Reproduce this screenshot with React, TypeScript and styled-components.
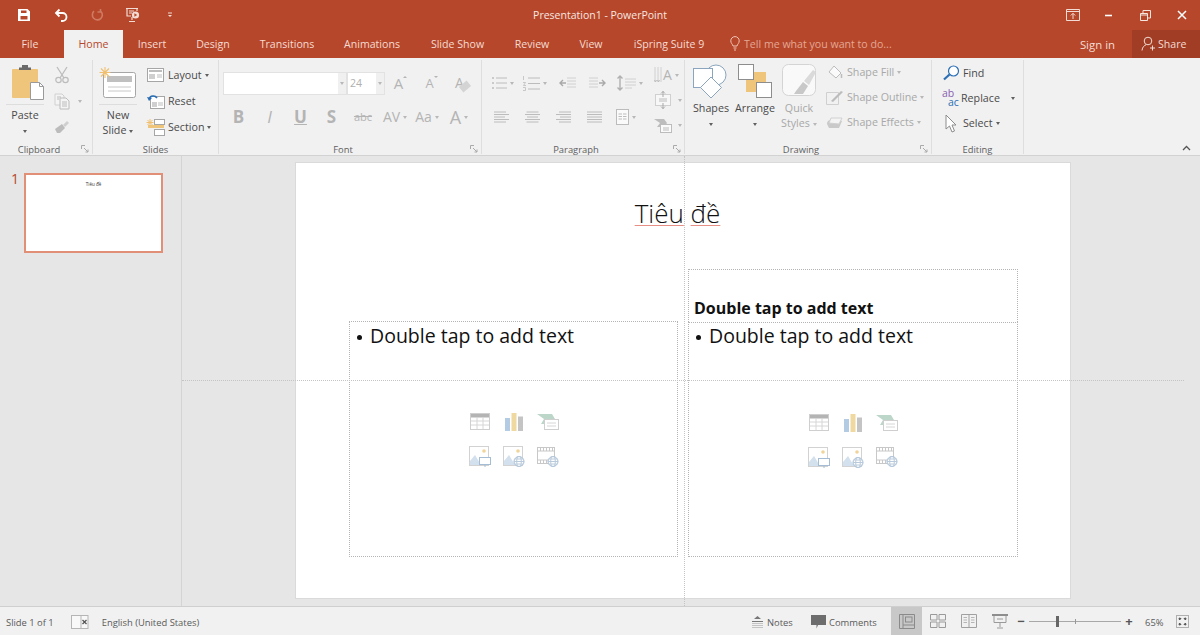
import React, { FC, ReactNode } from 'react'
import styled, { createGlobalStyle } from 'styled-components'

const ACCENT = '#b7472a'
const RIBBON = '#f1f1f1'
const TEXT = '#4a4a4a'
const DIM = '#a8a8a8'

const GlobalStyle = createGlobalStyle`
  html, body { margin: 0; padding: 0; background: #e6e6e6; overflow: hidden; }
  body { font-family: "Open Sans", "Noto Sans", sans-serif; color: ${TEXT}; }
`

const Page = styled.div`
  width: 1200px;
  height: 635px;
  display: flex;
  flex-direction: column;
  overflow: hidden;
`

/* title bar */
const TitleBar = styled.header`
  height: 30px;
  background: ${ACCENT};
  display: grid;
  grid-template-columns: 1fr auto 1fr;
  align-items: center;
  color: #f6e6e0;
`
const Qat = styled.div`
  display: flex;
  padding-left: 6px;
`
const BarButton = styled.div`
  width: 36.4px;
  height: 26px;
  display: flex;
  align-items: center;
  justify-content: center;
`
const Title = styled.div`
  font-size: 10.5px;
`
const WindowButtons = styled.div`
  display: flex;
  justify-content: flex-end;
`

/* tabs */
const TabRow = styled.nav`
  height: 28px;
  background: ${ACCENT};
  display: flex;
  align-items: stretch;
  color: #f3dcd4;
  font-size: 10.6px;
`
const Tab = styled.div<{ $w: number; $active?: boolean }>`
  width: ${(p) => p.$w}px;
  box-sizing: border-box;
  padding-bottom: 1px;
  display: flex;
  align-items: center;
  justify-content: center;
  background: ${(p) => (p.$active ? RIBBON : 'transparent')};
  color: ${(p) => (p.$active ? ACCENT : 'inherit')};
`
const FileTab = styled(Tab)`
  padding-right: 4px;
`
const TellMe = styled.div`
  margin-left: 10px;
  padding-bottom: 1px;
  display: flex;
  align-items: center;
  gap: 4px;
  color: #e3a895;
`
const SignIn = styled.div`
  margin-left: auto;
  padding: 1px 17px 0 0;
  font-size: 11.4px;
  display: flex;
  align-items: center;
`
const ShareButton = styled.div`
  width: 68px;
  box-sizing: border-box;
  padding: 0 0 1px 9px;
  background: #a03d24;
  display: flex;
  align-items: center;
  gap: 2px;
`

/* ribbon */
const Ribbon = styled.section`
  height: 97px;
  background: ${RIBBON};
  border-bottom: 1px solid #d2d2d2;
  display: flex;
  font-size: 10.7px;
`
const GroupBox = styled.div<{ $w: number }>`
  width: ${(p) => p.$w}px;
  margin: 2px 0 1px;
  border-right: 1px solid #dedede;
  box-sizing: border-box;
  display: flex;
  flex-direction: column;
`
const GroupBody = styled.div`
  flex: 1;
  display: flex;
  min-height: 0;
`
const GroupLabel = styled.div<{ $launcher?: boolean }>`
  height: 10px;
  position: relative;
  padding-right: ${(p) => (p.$launcher ? 14 : 0)}px;
  display: flex;
  align-items: center;
  justify-content: center;
  font-size: 9.4px;
  color: #606060;
`
const Launcher = styled.div`
  position: absolute;
  right: 3px;
  top: 1px;
  display: flex;
`
const Collapse = styled.div`
  margin-left: auto;
  align-self: flex-end;
  padding: 0 9px 4px 0;
  display: flex;
`
const Caret = styled.span<{ $dim?: boolean; $left?: number }>`
  display: inline-block;
  width: 0;
  height: 0;
  margin-left: ${(p) => p.$left ?? 3}px;
  border: 2.5px solid transparent;
  border-top: 3px solid ${(p) => (p.$dim ? '#b8b8b8' : '#606060')};
  border-bottom: 0;
  vertical-align: middle;
`
const BigButton = styled.div<{ $w: number; $dim?: boolean; $left?: number }>`
  width: ${(p) => p.$w}px;
  margin-left: ${(p) => p.$left ?? 0}px;
  display: flex;
  flex-direction: column;
  align-items: center;
  text-align: center;
  line-height: 15px;
  color: ${(p) => (p.$dim ? DIM : TEXT)};
`
const BigIcon = styled.div<{ $h: number; $rule?: boolean; $mb?: number }>`
  height: ${(p) => p.$h}px;
  width: 100%;
  display: flex;
  align-items: center;
  justify-content: center;
  border-bottom: ${(p) => (p.$rule ? '1px solid #dddddd' : 'none')};
  margin-bottom: ${(p) => p.$mb ?? 3}px;
`
const StackColumn = styled.div<{ $left: number; $top?: number; $gap?: number }>`
  margin-left: ${(p) => p.$left}px;
  padding-top: ${(p) => p.$top ?? 5}px;
  display: flex;
  flex-direction: column;
  gap: ${(p) => p.$gap ?? 6}px;
`
const SmallRow = styled.div<{ $dim?: boolean; $gap?: number }>`
  height: 20px;
  display: flex;
  align-items: center;
  gap: ${(p) => p.$gap ?? 3}px;
  white-space: nowrap;
  color: ${(p) => (p.$dim ? DIM : TEXT)};
`
const IconSlot = styled.span<{ $w: number }>`
  width: ${(p) => p.$w}px;
  display: flex;
  align-items: center;
  justify-content: center;
`
const ToolRows = styled.div`
  display: flex;
  flex-direction: column;
  padding: 11px 0 0 4px;
  gap: 10px;
`
const ToolRow = styled.div`
  display: flex;
  height: 24px;
  align-items: center;
`
const Tool = styled.div<{ $w: number }>`
  width: ${(p) => p.$w}px;
  height: 24px;
  display: flex;
  align-items: center;
  justify-content: center;
  color: #b4b4b4;
`
const ComboField = styled.div<{ $w: number }>`
  width: ${(p) => p.$w}px;
  height: 23px;
  background: #ffffff;
  border: 1px solid #e2e2e2;
  box-sizing: border-box;
  display: flex;
  align-items: center;
  justify-content: space-between;
  padding: 0 2px;
  font-size: 10.5px;
  color: #b0b0b0;
`
const ComboDrop = styled.div`
  width: 8px;
  height: 21px;
  margin-right: -2px;
  margin-left: auto;
  background: #f0f0f0;
  display: flex;
  align-items: center;
  justify-content: center;
  & > span { margin: 0; }
`
const ToolLetter = styled.span<{ $size: number; $bold?: boolean; $italic?: boolean; $under?: boolean; $strike?: boolean }>`
  font-size: ${(p) => p.$size}px;
  line-height: 20px;
  font-weight: ${(p) => (p.$bold ? 700 : 400)};
  font-style: ${(p) => (p.$italic ? 'italic' : 'normal')};
  text-decoration: ${(p) => (p.$under ? 'underline' : p.$strike ? 'line-through' : 'none')};
  color: #b4b4b4;
`
const SizeArrow = styled.span<{ $up?: boolean }>`
  align-self: flex-start;
  margin-top: 5px;
  width: 0;
  height: 0;
  border: 2.5px solid transparent;
  ${(p) => (p.$up ? 'border-bottom: 2.5px solid #b4b4b4; border-top: 0;' : 'border-top: 2.5px solid #b4b4b4; border-bottom: 0;')}
`
const EraserMark = styled.span`
  width: 10px;
  height: 7px;
  margin: 7px 0 0 -4px;
  background: #d4d4d4;
  transform: rotate(-40deg);
`
const ReplaceMark = styled.span`
  display: inline-flex;
  flex-direction: column;
  width: 18px;
  font-size: 10.5px;
  line-height: 9px;
  color: #8a5fb0;
  & > b { font-weight: 400; color: #2a6fb5; padding-left: 6px; }
`

/* work area */
const Work = styled.main`
  flex: 1;
  display: flex;
  background: #e6e6e6;
  min-height: 0;
`
const ThumbPane = styled.aside`
  width: 170px;
  border-right: 1px solid #d4d4d4;
  display: flex;
  padding: 17px 0 0 11px;
  gap: 5px;
`
const ThumbNumber = styled.div`
  font-size: 14px;
  line-height: 12px;
  color: ${ACCENT};
`
const Thumb = styled.div`
  width: 135px;
  height: 70px;
  background: #fff;
  border: 2px solid #e28f78;
  text-align: center;
  font-size: 4.5px;
  line-height: 6px;
  padding-top: 6px;
  color: #333;
`
const SlidePane = styled.div`
  flex: 1;
  position: relative;
  padding: 7px 0 0 114px;
`
const GuideH = styled.div`
  position: absolute;
  left: 0;
  right: 16px;
  top: 224px;
  border-top: 1px dotted #c4c4c4;
`
const GuideV = styled.div`
  position: absolute;
  left: 502px;
  top: 0;
  bottom: 0;
  border-left: 1px dotted #c4c4c4;
`
const Slide = styled.div`
  width: 774px;
  height: 435px;
  background: #fff;
  box-shadow: 0 0 0 1px #dadada;
  display: flex;
  flex-direction: column;
`
const SlideTitle = styled.div`
  height: 106px;
  padding: 32px 11px 0 0;
  box-sizing: border-box;
  text-align: center;
  font-weight: 300;
  font-size: 26px;
  line-height: 36px;
  color: #111;
`
const Squiggle = styled.span`
  text-decoration-line: underline;
  text-decoration-style: solid;
  text-decoration-color: #e58f85;
  text-decoration-thickness: 1px;
  text-underline-offset: 2px;
`
const Columns = styled.div`
  display: flex;
  gap: 10px;
  padding-left: 53px;
  align-items: flex-end;
`
const Column = styled.div<{ $w: number }>`
  width: ${(p) => p.$w}px;
  display: flex;
  flex-direction: column;
`
const HeadBox = styled.div`
  height: 53px;
  box-sizing: border-box;
  border: 1px dotted #b4b4b4;
  border-bottom: 0;
  display: flex;
  align-items: flex-end;
  padding: 0 5px 3px;
  font-size: 16px;
  font-weight: 700;
  line-height: 22px;
  color: #111;
`
const BodyBox = styled.div<{ $h: number }>`
  position: relative;
  height: ${(p) => p.$h}px;
  box-sizing: border-box;
  border: 1px dotted #b4b4b4;
  padding: 0 5px;
  font-size: 19.5px;
  line-height: 28px;
  color: #111;
`
const Bullet = styled.div<{ $lift?: number }>`
  display: flex;
  gap: 7px;
  margin-top: ${(p) => -(p.$lift ?? 0)}px;
`
const BulletDot = styled.span`
  width: 8px;
  height: 8px;
  margin-top: 11px;
  display: flex;
  align-items: center;
  justify-content: center;
  &::before {
    content: '';
    width: 5px;
    height: 5px;
    border-radius: 50%;
    background: #111;
  }
`
const ContentIcons = styled.div`
  position: absolute;
  left: 50%;
  top: 50%;
  transform: translate(-50%, -50%);
  display: grid;
  grid-template-columns: repeat(3, 34px);
  grid-auto-rows: 35px;
  place-items: center;
`

/* status bar */
const StatusBar = styled.footer`
  height: 28px;
  background: ${RIBBON};
  border-top: 1px solid #cfcfcf;
  display: flex;
  align-items: center;
  font-size: 9.4px;
  color: #5a5a5a;
`
const StatusText = styled.div<{ $left?: number }>`
  margin-left: ${(p) => p.$left ?? 0}px;
  padding-top: 2px;
  white-space: nowrap;
`
const SpellSlot = styled.div`
  margin-left: 17px;
  padding-top: 2px;
  display: flex;
`
const StatusRight = styled.div`
  margin-left: auto;
  padding-right: 2.5px;
  display: flex;
  align-items: center;
  height: 100%;
`
const StatusItem = styled.div<{ $w: number }>`
  width: ${(p) => p.$w}px;
  padding-top: 2px;
  display: flex;
  align-items: center;
  gap: 3px;
`
const ViewButton = styled.div<{ $active?: boolean; $left?: number }>`
  width: 31px;
  height: 100%;
  margin-left: ${(p) => p.$left ?? 0}px;
  display: flex;
  align-items: center;
  justify-content: center;
  background: ${(p) => (p.$active ? '#c8c8c8' : 'transparent')};
`
const ZoomSlider = styled.div`
  width: 92px;
  height: 1px;
  margin: 0 2px;
  background: #a8a8a8;
  position: relative;
`
const ZoomThumb = styled.div`
  position: absolute;
  left: 27px;
  top: -5px;
  width: 3px;
  height: 11px;
  background: #666;
`
const ZoomTick = styled.div`
  position: absolute;
  left: 46px;
  top: -2px;
  width: 1px;
  height: 5px;
  background: #999;
`
const ZoomGlyph = styled.div`
  width: 12px;
  text-align: center;
  font-size: 13px;
  line-height: 12px;
  font-weight: 700;
  color: #555;
`

/* drawings */
type SvgProps = { w: number; h: number; children: ReactNode }
const Svg: FC<SvgProps> = ({ w, h, children }) => (
  <svg width={w} height={h} viewBox={`0 0 ${w} ${h}`} fill="none">
    {children}
  </svg>
)

const G = '#bcbcbc'
const G2 = '#d0d0d0'

const SaveIcon = () => (
  <Svg w={14} h={14}>
    <path fillRule="evenodd" fill="#fff" d="M1 1h9.500L13 3.500V13H1zM4 2.500v2.500h5.500V2.500zM3.500 8v3.500h7V8z" />
  </Svg>
)
const UndoIcon = () => (
  <Svg w={14} h={14}>
    <path d="M5.5 1.5 2 5l3.500 3.500" stroke="#fff" strokeWidth="1.800" />
    <path d="M2.500 5H8.500a3.400 3.400 0 0 1 0 8H7" stroke="#fff" strokeWidth="1.800" />
  </Svg>
)
const RedoIcon = () => (
  <Svg w={14} h={14}>
    <path d="M4 3.200A5 5 0 1 0 11 3.500M10.500 1v3h-3" stroke="#cf7a62" strokeWidth="1.600" />
  </Svg>
)
const PresentIcon = () => (
  <Svg w={16} h={16}>
    <path d="M1 1.500h12M2 2v7h4M12 2v2M4 4h5M4 6h3M7 10v3M4 14.500h6" stroke="#f2dcd5" strokeWidth="1.200" />
    <circle cx="10.500" cy="8" r="3.600" fill="#f2dcd5" />
    <path d="M9.400 6.200 12.200 8l-2.800 1.800z" fill={ACCENT} />
  </Svg>
)
const QatMore = () => (
  <Svg w={6} h={6}>
    <path d="M1 1h4" stroke="#f2dcd5" />
    <path d="M1 3h4L3 5z" fill="#f2dcd5" />
  </Svg>
)
const RibbonDisplayIcon = () => (
  <Svg w={14} h={12}>
    <path d="M.5.5h13v11H.5zM.5 2.500h13" stroke="#f2dcd5" />
    <path d="M7 10V4.500M4.800 6.500 7 4.300l2.200 2.200" stroke="#f2dcd5" />
  </Svg>
)
const MinimizeIcon = () => (
  <Svg w={10} h={10}>
    <path d="M1 5.500h7" stroke="#fff" strokeWidth="1.600" />
  </Svg>
)
const RestoreIcon = () => (
  <Svg w={11} h={11}>
    <path d="M.5 3.500h7v7h-7zM.5 5h7M3 3V.5h7.500V8H8" stroke="#f6e6e0" />
  </Svg>
)
const CloseIcon = () => (
  <Svg w={10} h={10}>
    <path d="m1 1 8 8M9 1 1 9" stroke="#fff" strokeWidth="1.500" />
  </Svg>
)
const BulbIcon = () => (
  <Svg w={10} h={15}>
    <path d="M3 10C2.600 8 .8 7.400.8 4.800a4.200 4.200 0 0 1 8.400 0C9.200 7.400 7.400 8 7 10zM3.500 12h3M4 14h2" stroke="#f0c6b8" />
  </Svg>
)
const PersonPlus = () => (
  <Svg w={15} h={15}>
    <circle cx="7" cy="5" r="3.800" stroke="#f3dcd4" />
    <path d="M1 14.500C1.300 10.800 3.500 9.500 5 8.800M9 12h5M11.500 9.500v5" stroke="#f3dcd4" />
  </Svg>
)
const PasteIcon = () => (
  <Svg w={38} h={36}>
    <rect x="6" y="5" width="26" height="29" rx="1" fill="#eec57a" />
    <path d="M13 6V3.500h3V1h6v2.500h3V6z" fill="#6a6a6a" />
    <path d="M24.500 18.500h9l4 4v13h-13z" fill="#fff" stroke="#9a9a9a" />
    <path d="M33.500 18.500v4h4" stroke="#9a9a9a" />
  </Svg>
)
const CutIcon = () => (
  <Svg w={16} h={18}>
    <path d="M3 1l7 11M13 1 6 12" stroke={G} strokeWidth="1.300" />
    <circle cx="4.500" cy="14" r="2.700" stroke={G} strokeWidth="1.200" />
    <circle cx="11.500" cy="14" r="2.700" stroke={G} strokeWidth="1.200" />
  </Svg>
)
const CopyIcon = () => (
  <Svg w={16} h={17}>
    <path d="M1 1h7l2 2v9H1z" fill="#f4f4f4" stroke={G2} />
    <path d="M6 5h6l3 3v8H6z" fill="#f4f4f4" stroke={G} />
    <path d="M3 4h4M3 6h2M8 9h5M8 11h5M8 13h5" stroke={G} />
  </Svg>
)
const BrushIcon = () => (
  <Svg w={16} h={14}>
    <path d="M1 9 8 4l3 4-5 5H3z" fill={G} />
    <path d="m9 5 4-4 2 2-4 4z" fill="#cfcfcf" />
  </Svg>
)
const NewSlideIcon = () => (
  <Svg w={38} h={32}>
    <rect x="4.500" y="6.500" width="32" height="25" rx="2" fill="#fff" stroke="#a6a6a6" />
    <rect x="8" y="10" width="25" height="6" fill="#c0c0c0" />
    <path d="M9 21h23M9 25h23" stroke="#c8c8c8" />
    <path d="M6 1v11M.5 6.500h11M2 2.500l8 8M10 2.500l-8 8" stroke="#f0c070" strokeWidth="1.100" />
  </Svg>
)
const LayoutIcon = () => (
  <Svg w={17} h={14}>
    <rect x=".5" y=".5" width="16" height="13" fill="#fff" stroke="#a6a6a6" />
    <rect x="2" y="2" width="13" height="2" fill="#bdbdbd" />
    <rect x="2" y="6" width="6" height="5" fill="#cfcfcf" />
    <path d="M10 7h5M10 9h5" stroke="#bdbdbd" />
  </Svg>
)
const ResetIcon = () => (
  <Svg w={18} h={16}>
    <rect x="3.500" y="3.500" width="14" height="12" fill="#fff" stroke="#a6a6a6" />
    <rect x="5" y="9" width="5" height="5" fill="#cfcfcf" />
    <path d="M11 10h5M11 12h5" stroke="#bdbdbd" />
    <path d="M2 6a4.500 4.500 0 0 1 8-1" stroke="#2a6fb5" strokeWidth="1.600" />
    <path d="M0 4l2 4 3-3z" fill="#2a6fb5" />
  </Svg>
)
const SectionIcon = () => (
  <Svg w={19} h={18}>
    <rect x="8.500" y="1.500" width="10" height="5" fill="#fff" stroke="#a6a6a6" />
    <rect x="8.500" y="11.500" width="10" height="6" fill="#fff" stroke="#a6a6a6" />
    <rect x="2" y="7" width="16" height="3" fill="#eec57a" />
    <path d="M4 1v7M.5 4.500h7M1.500 2l5 5M6.500 2l-5 5" stroke="#f0c070" />
  </Svg>
)
const BulletsIcon = () => (
  <Svg w={16} h={16}>
    <circle cx="2" cy="3" r="1" fill={G} />
    <circle cx="2" cy="8" r="1" fill={G} />
    <circle cx="2" cy="13" r="1" fill={G} />
    <path d="M5 3h11M5 8h11M5 13h11" stroke={G} />
  </Svg>
)
const NumberIcon = () => (
  <Svg w={18} h={16}>
    <path d="M1.500 1v4M1 7.500h2.500l-2 3h2.500M1 12.500h2.500v3H1" stroke={G} strokeWidth=".8" />
    <path d="M6 3h12M6 8.500h12M6 14h12" stroke={G} />
  </Svg>
)
const IndentIcon: FC<{ flip?: boolean }> = ({ flip }) => (
  <Svg w={18} h={12}>
    <g transform={flip ? 'translate(18 0) scale(-1 1)' : undefined}>
      <path d="M9 1h9M9 4h9M9 7h9M9 10h9" stroke={G2} />
      <path d="M8 6H2M5 3 2 6l3 3" stroke="#a9a9a9" strokeWidth="1.400" />
    </g>
  </Svg>
)
const LineSpacing = () => (
  <Svg w={20} h={18}>
    <path d="M4 2v14M1.500 4.500 4 2l2.500 2.500M1.500 13.500 4 16l2.500-2.500" stroke="#b0b0b0" strokeWidth="1.400" />
    <path d="M9 5h11M9 8h11M9 11h11M9 14h7" stroke={G2} />
  </Svg>
)
const TextDirection = () => (
  <Svg w={9} h={18}>
    <path d="M1 1v15M4 1v15M7 1v15" stroke={G2} />
    <path d="M.5 14l1 2 1-2M3.500 14l1 2 1-2" stroke={G} />
  </Svg>
)
const AlignTextIcon = () => (
  <Svg w={18} h={18}>
    <rect x="1.500" y="3.500" width="15" height="11" fill="#f7f7f7" stroke={G2} />
    <path d="M9 0v6M7 2.500 9 .5l2 2M9 18v-6M7 15.500l2 2 2-2" stroke="#a9a9a9" />
    <path d="M5 8h8M5 10h8" stroke={G} />
  </Svg>
)
const SmartArtIcon = () => (
  <Svg w={18} h={16}>
    <path d="M0 2h10l3 4-3 4H3l3-4z" fill="#bdbdbd" />
    <rect x="6.500" y="7.500" width="11" height="8" fill="#fafafa" stroke={G} />
    <path d="M9 11h6M9 13h6" stroke={G} />
  </Svg>
)
const AlignIcon: FC<{ kind: 'l' | 'c' | 'r' | 'j' }> = ({ kind }) => {
  const rows = kind === 'l' ? 'M0 1h12M0 3.500h15M0 6h11M0 8.500h15M0 11h12'
    : kind === 'c' ? 'M1.500 1h12M0 3.500h15M2 6h11M0 8.500h15M1.500 11h12'
    : kind === 'r' ? 'M3 1h12M0 3.500h15M4 6h11M0 8.500h15M3 11h12'
    : 'M0 1h15M0 3.500h15M0 6h15M0 8.500h15M0 11h15'
  return (
    <Svg w={15} h={12}>
      <path d={rows} stroke={G} />
    </Svg>
  )
}
const ColumnsIcon = () => (
  <Svg w={13} h={16}>
    <rect x=".5" y=".5" width="12" height="15" fill="#fafafa" stroke={G} />
    <path d="M2.500 5h3.500M7 5h3.500M2.500 7.500h3.500M7 7.500h3.500M2.500 10h3.500M7 10h3.500" stroke={G} />
  </Svg>
)
const ShapesIcon = () => (
  <Svg w={36} h={34}>
    <circle cx="23" cy="11" r="10" fill="#fff" stroke="#8aa5bd" />
    <rect x=".5" y="4.500" width="19" height="19" fill="#fff" stroke="#8aa5bd" />
    <path d="m18 13 10.500 10.500L18 34 7.500 23.500z" fill="#fff" stroke="#8aa5bd" />
  </Svg>
)
const ArrangeIcon = () => (
  <Svg w={34} h={34}>
    <rect x="8" y="8" width="20" height="20" fill="#eec57a" />
    <rect x=".5" y=".5" width="15" height="15" fill="#fff" stroke="#8d8d8d" />
    <rect x="18.500" y="18.500" width="15" height="15" fill="#fff" stroke="#8d8d8d" />
  </Svg>
)
const QuickIcon = () => (
  <Svg w={34} h={34}>
    <rect x=".5" y=".5" width="33" height="31" rx="6" fill="#f9f9f9" stroke="#d4d4d4" />
    <path d="M14 27l7-9 5 4-5 8H12z" fill="#c8c8c8" />
    <path d="m22 17 9-11 3 2-7 13z" fill="#dadada" />
  </Svg>
)
const FillIcon = () => (
  <Svg w={16} h={15}>
    <path d="m7 1 7 7-5 5-7-6z" fill="#fafafa" stroke={G} />
    <path d="M14.500 9v4" stroke={G} strokeWidth="1.500" />
  </Svg>
)
const OutlineIcon = () => (
  <Svg w={18} h={15}>
    <path d="M.5 2.500h12v12H.5z" stroke={G2} />
    <path d="m5 11 10-10 2 1L7 12z" fill={G} />
  </Svg>
)
const EffectsIcon = () => (
  <Svg w={17} h={14}>
    <path d="M1 9a4 4 0 0 1 3-4h9l3 1-3 7H3z" fill="#c9c9c9" />
    <path d="M3 8l2-5h11l-3 6z" fill="#f4f4f4" stroke={G2} />
  </Svg>
)
const FindIcon = () => (
  <Svg w={18} h={16}>
    <circle cx="11.500" cy="6" r="5" fill="#fff" stroke="#2a6fb5" strokeWidth="1.200" />
    <path d="M7.500 9.500 2 14.500" stroke="#2a6fb5" strokeWidth="2.200" />
  </Svg>
)
const SelectIcon = () => (
  <Svg w={12} h={19}>
    <path d="M1 1v14l3.500-3 2.500 6 2.500-1-2.500-6H11z" fill="#fff" stroke="#8d8d8d" />
  </Svg>
)
const CollapseIcon = () => (
  <Svg w={9} h={6}>
    <path d="M1 5 4.500 1.500 8 5" stroke="#555" strokeWidth="1.300" />
  </Svg>
)
const LauncherIcon = () => (
  <Svg w={8} h={8}>
    <path d="M.5 4V.5H4M3 3l4 4M7 4.500V7H4.500" stroke="#aaaaaa" />
  </Svg>
)

const TableIcon = () => (
  <Svg w={20} h={17}>
    <rect x=".5" y=".5" width="19" height="16" fill="#fff" stroke="#cfcfcf" />
    <rect x="1" y="1" width="18" height="3.500" fill="#b4b4b4" />
    <path d="M1 8h18M1 12h18M7 4v12M13 4v12" stroke="#d6d6d6" />
  </Svg>
)
const ChartIcon = () => (
  <Svg w={20} h={19}>
    <rect x="1" y="6" width="5" height="13" fill="#b4cbe4" />
    <rect x="7.500" y="1" width="5" height="18" fill="#f0d9a0" />
    <rect x="14" y="4.500" width="5" height="14.500" fill="#c4c4c4" />
  </Svg>
)
const SmartIcon = () => (
  <Svg w={22} h={17}>
    <path d="M0 1h15l3 5-3 5H4l3-5z" fill="#bcd6c9" />
    <rect x="7.500" y="6.500" width="14" height="10" fill="#fff" stroke="#cfcfcf" />
    <path d="M10 10h9M10 13h9" stroke="#d6d6d6" />
  </Svg>
)
const PictureBase = () => (
  <>
    <rect x=".5" y=".5" width="19" height="19" fill="#fff" stroke="#d2d2d2" />
    <circle cx="15" cy="5" r="1.800" fill="#f0d49a" />
    <path d="M1 19v-4l5-6 6 10z" fill="#d3e0ee" />
  </>
)
const PictureIcon = () => (
  <Svg w={22} h={21}>
    <PictureBase />
    <rect x="10.500" y="11.500" width="11" height="7" fill="#fff" stroke="#a4bcd4" />
    <path d="M16 19v2" stroke="#a4bcd4" />
  </Svg>
)
const Globe: FC<{ x: number; y: number }> = ({ x, y }) => (
  <g transform={`translate(${x} ${y})`}>
    <circle cx="5.500" cy="5.500" r="5" fill="#fff" stroke="#a4bcd4" />
    <ellipse cx="5.500" cy="5.500" rx="2.300" ry="5" stroke="#b8cadb" />
    <path d="M.5 5.500h10M1.500 3h8M1.500 8h8" stroke="#b8cadb" />
  </g>
)
const OnlinePictureIcon = () => (
  <Svg w={22} h={21}>
    <PictureBase />
    <Globe x={10.5} y={10} />
  </Svg>
)
const VideoIcon = () => (
  <Svg w={22} h={20}>
    <rect x=".5" y=".5" width="17" height="16" fill="#fff" stroke="#c8c8c8" />
    <path d="M.5 4h17M.5 13h17M3.500 1v3M6.500 1v3M9.500 1v3M12.500 1v3M15.500 1v3M3.500 13v3M6.500 13v3M9.500 13v3" stroke="#c8c8c8" />
    <Globe x={10.5} y={9} />
  </Svg>
)

const SpellIcon = () => (
  <Svg w={18} h={14}>
    <rect x=".5" y=".5" width="10" height="13" stroke="#b5b5b5" fill="#f8f8f8" />
    <rect x="10" y=".5" width="7" height="13" fill="#f8f8f8" stroke="#b5b5b5" />
    <path d="m11.500 5 4 4M15.500 5l-4 4" stroke="#555" strokeWidth="1.300" />
  </Svg>
)
const NotesIcon = () => (
  <Svg w={13} h={14}>
    <path d="M6.500 1 3 4h7z" fill="#777" />
    <path d="M1 6.500h11" stroke="#777" />
    <path d="M1 8.500h11M1 10.500h11M1 12.500h11" stroke="#c4c4c4" />
  </Svg>
)
const CommentIcon = () => (
  <Svg w={15} h={14}>
    <path d="M0 0h15v10H7l-1.500 3.500V10H0z" fill="#6d6d6d" />
  </Svg>
)
const NormalView = () => (
  <Svg w={16} h={15}>
    <path d="M.5.5h15v14H.5zM4 .5v14M4 11h11.500" stroke="#8a8a8a" />
    <rect x="6.500" y="3" width="6.500" height="5" stroke="#8a8a8a" />
  </Svg>
)
const SorterView = () => (
  <Svg w={16} h={14}>
    <path d="M.5.5h6.500v5.500H.5zM9 .5h6.500v5.500H9zM.5 8h6.500v5.500H.5zM9 8h6.500v5.500H9z" stroke="#9a9a9a" />
  </Svg>
)
const ReadingView = () => (
  <Svg w={16} h={14}>
    <path d="M.5.5h15v13H.5zM8 .5v13" stroke="#a0a0a0" />
    <path d="M2.500 3.500h3.500M2.500 6h3.500M2.500 8.500h3.500M10 3.500h3.500M10 6h3.500M10 8.500h3.500" stroke="#b5b5b5" />
  </Svg>
)
const ShowView = () => (
  <Svg w={16} h={15}>
    <path d="M0 1h16" stroke="#6d6d6d" strokeWidth="1.500" />
    <path d="M2 2v6.500h12V2M8 9v4M5 14h6M5 5h6" stroke="#9a9a9a" />
  </Svg>
)
const FitIcon = () => (
  <Svg w={13} h={13}>
    <rect x=".5" y=".5" width="12" height="12" stroke="#b0b0b0" />
    <path d="m3 3 2 .5L3.500 5zM10 3l-2 .5L9.500 5zM3 10l2-.5L3.500 8zM10 10l-2-.5L9.500 8z" fill="#555" stroke="#555" />
  </Svg>
)

const Group: FC<{ w: number; label: string; launcher?: boolean; children: ReactNode }> = ({ w, label, launcher, children }) => (
  <GroupBox $w={w}>
    <GroupBody>{children}</GroupBody>
    <GroupLabel $launcher={launcher}>
      {label}
      {launcher && (
        <Launcher>
          <LauncherIcon />
        </Launcher>
      )}
    </GroupLabel>
  </GroupBox>
)

const TABS: [string, number][] = [
  ['Home', 59], ['Insert', 58], ['Design', 64], ['Transitions', 84],
  ['Animations', 86], ['Slide Show', 85], ['Review', 64], ['View', 54], ['iSpring Suite 9', 102],
]

const ALIGNS = ['l', 'c', 'r', 'j'] as const

const Placeholder: FC<{ h: number; lift?: number }> = ({ h, lift }) => (
  <BodyBox $h={h}>
    <Bullet $lift={lift}>
      <BulletDot />
      <span>Double tap to add text</span>
    </Bullet>
    <ContentIcons>
      <TableIcon />
      <ChartIcon />
      <SmartIcon />
      <PictureIcon />
      <OnlinePictureIcon />
      <VideoIcon />
    </ContentIcons>
  </BodyBox>
)

export default function App() {
  return (
    <Page>
      <GlobalStyle />
      <TitleBar>
        <Qat>
          <BarButton><SaveIcon /></BarButton>
          <BarButton><UndoIcon /></BarButton>
          <BarButton><RedoIcon /></BarButton>
          <BarButton><PresentIcon /></BarButton>
          <BarButton><QatMore /></BarButton>
        </Qat>
        <Title>Presentation1 - PowerPoint</Title>
        <WindowButtons>
          <BarButton><RibbonDisplayIcon /></BarButton>
          <BarButton><MinimizeIcon /></BarButton>
          <BarButton><RestoreIcon /></BarButton>
          <BarButton><CloseIcon /></BarButton>
        </WindowButtons>
      </TitleBar>

      <TabRow>
        <FileTab $w={64}>File</FileTab>
        {TABS.map(([name, w]) => (
          <Tab key={name} $w={w} $active={name === 'Home'}>{name}</Tab>
        ))}
        <TellMe>
          <BulbIcon />
          Tell me what you want to do...
        </TellMe>
        <SignIn>Sign in</SignIn>
        <ShareButton>
          <PersonPlus />
          Share
        </ShareButton>
      </TabRow>

      <Ribbon>
        <Group w={93} label="Clipboard" launcher>
          <BigButton $w={38} $left={6}>
            <BigIcon $h={44} $rule><PasteIcon /></BigIcon>
            <span>Paste</span>
            <span><Caret $left={0} /></span>
          </BigButton>
          <StackColumn $left={10}>
            <SmallRow><CutIcon /></SmallRow>
            <SmallRow><CopyIcon /><Caret $dim $left={5} /></SmallRow>
            <SmallRow><BrushIcon /></SmallRow>
          </StackColumn>
        </Group>

        <Group w={126} label="Slides">
          <BigButton $w={38} $left={6}>
            <BigIcon $h={44} $rule><NewSlideIcon /></BigIcon>
            <span>New</span>
            <span>Slide<Caret /></span>
          </BigButton>
          <StackColumn $left={9}>
            <SmallRow><IconSlot $w={19}><LayoutIcon /></IconSlot>Layout<Caret $left={0} /></SmallRow>
            <SmallRow><IconSlot $w={19}><ResetIcon /></IconSlot>Reset</SmallRow>
            <SmallRow><IconSlot $w={19}><SectionIcon /></IconSlot>Section<Caret $left={0} /></SmallRow>
          </StackColumn>
        </Group>

        <Group w={263} label="Font" launcher>
          <ToolRows>
            <ToolRow>
              <ComboField $w={124}><ComboDrop><Caret $dim /></ComboDrop></ComboField>
              <ComboField $w={38}>24<ComboDrop><Caret $dim /></ComboDrop></ComboField>
              <Tool $w={31}><ToolLetter $size={15}>A</ToolLetter><SizeArrow $up /></Tool>
              <Tool $w={31}><ToolLetter $size={13}>A</ToolLetter><SizeArrow /></Tool>
              <Tool $w={31}><ToolLetter $size={14}>A</ToolLetter><EraserMark /></Tool>
            </ToolRow>
            <ToolRow>
              <Tool $w={31}><ToolLetter $size={17} $bold>B</ToolLetter></Tool>
              <Tool $w={31}><ToolLetter $size={17} $italic>I</ToolLetter></Tool>
              <Tool $w={31}><ToolLetter $size={17} $bold $under>U</ToolLetter></Tool>
              <Tool $w={31}><ToolLetter $size={17} $bold>S</ToolLetter></Tool>
              <Tool $w={32}><ToolLetter $size={11} $strike>abc</ToolLetter></Tool>
              <Tool $w={32}><ToolLetter $size={14}>AV</ToolLetter><Caret $dim /></Tool>
              <Tool $w={32}><ToolLetter $size={14}>Aa</ToolLetter><Caret $dim /></Tool>
              <Tool $w={32}><ToolLetter $size={18}>A</ToolLetter><Caret $dim /></Tool>
            </ToolRow>
          </ToolRows>
        </Group>

        <Group w={203} label="Paragraph" launcher>
          <ToolRows>
            <ToolRow>
              <Tool $w={32}><BulletsIcon /><Caret $dim /></Tool>
              <Tool $w={33}><NumberIcon /><Caret $dim /></Tool>
              <Tool $w={31}><IndentIcon /></Tool>
              <Tool $w={31}><IndentIcon flip /></Tool>
              <Tool $w={33}><LineSpacing /><Caret $dim /></Tool>
            </ToolRow>
            <ToolRow>
              {ALIGNS.map((kind) => (
                <Tool key={kind} $w={31}><AlignIcon kind={kind} /></Tool>
              ))}
              <Tool $w={32}><ColumnsIcon /><Caret $dim /></Tool>
            </ToolRow>
          </ToolRows>
          <StackColumn $left={8} $top={5} $gap={5}>
            <SmallRow $gap={0}><TextDirection /><ToolLetter $size={14}>A</ToolLetter><Caret $dim /></SmallRow>
            <SmallRow><AlignTextIcon /><Caret $dim /></SmallRow>
            <SmallRow><SmartArtIcon /><Caret $dim /></SmallRow>
          </StackColumn>
        </Group>

        <Group w={247} label="Drawing" launcher>
          <BigButton $w={44} $left={4}>
            <BigIcon $h={41} $mb={0}><ShapesIcon /></BigIcon>
            <span>Shapes</span>
            <span><Caret $left={0} /></span>
          </BigButton>
          <BigButton $w={44}>
            <BigIcon $h={41} $mb={0}><ArrangeIcon /></BigIcon>
            <span>Arrange</span>
            <span><Caret $left={0} /></span>
          </BigButton>
          <BigButton $w={44} $dim>
            <BigIcon $h={41} $mb={0}><QuickIcon /></BigIcon>
            <span>Quick</span>
            <span>Styles<Caret $dim /></span>
          </BigButton>
          <StackColumn $left={4} $top={2} $gap={5}>
            <SmallRow $dim><IconSlot $w={19}><FillIcon /></IconSlot>Shape Fill<Caret $dim $left={0} /></SmallRow>
            <SmallRow $dim><IconSlot $w={19}><OutlineIcon /></IconSlot>Shape Outline<Caret $dim $left={0} /></SmallRow>
            <SmallRow $dim><IconSlot $w={19}><EffectsIcon /></IconSlot>Shape Effects<Caret $dim $left={0} /></SmallRow>
          </StackColumn>
        </Group>

        <Group w={92} label="Editing">
          <StackColumn $left={10} $top={3} $gap={5}>
            <SmallRow><IconSlot $w={18}><FindIcon /></IconSlot>Find</SmallRow>
            <SmallRow $gap={1}><ReplaceMark>ab<b>ac</b></ReplaceMark>Replace<Caret $left={10} /></SmallRow>
            <SmallRow><IconSlot $w={18}><SelectIcon /></IconSlot>Select<Caret $left={0} /></SmallRow>
          </StackColumn>
        </Group>

        <Collapse><CollapseIcon /></Collapse>
      </Ribbon>

      <Work>
        <ThumbPane>
          <ThumbNumber>1</ThumbNumber>
          <Thumb>Tiêu đề</Thumb>
        </ThumbPane>
        <SlidePane>
          <Slide>
            <SlideTitle>
              <Squiggle>Tiêu</Squiggle> <Squiggle>đề</Squiggle>
            </SlideTitle>
            <Columns>
              <Column $w={329}>
                <Placeholder h={236} />
              </Column>
              <Column $w={330}>
                <HeadBox>Double tap to add text</HeadBox>
                <Placeholder h={235} lift={1} />
              </Column>
            </Columns>
          </Slide>
          <GuideH />
          <GuideV />
        </SlidePane>
      </Work>

      <StatusBar>
        <StatusText $left={6}>Slide 1 of 1</StatusText>
        <SpellSlot><SpellIcon /></SpellSlot>
        <StatusText $left={13}>English (United States)</StatusText>
        <StatusRight>
          <StatusItem $w={60}><NotesIcon />Notes</StatusItem>
          <StatusItem $w={80}><CommentIcon />Comments</StatusItem>
          <ViewButton $active><NormalView /></ViewButton>
          <ViewButton><SorterView /></ViewButton>
          <ViewButton><ReadingView /></ViewButton>
          <ViewButton><ShowView /></ViewButton>
          <ZoomGlyph>−</ZoomGlyph>
          <ZoomSlider><ZoomThumb /><ZoomTick /></ZoomSlider>
          <ZoomGlyph>+</ZoomGlyph>
          <StatusText $left={10}>65%</StatusText>
          <ViewButton $left={3}><FitIcon /></ViewButton>
        </StatusRight>
      </StatusBar>
    </Page>
  )
}
